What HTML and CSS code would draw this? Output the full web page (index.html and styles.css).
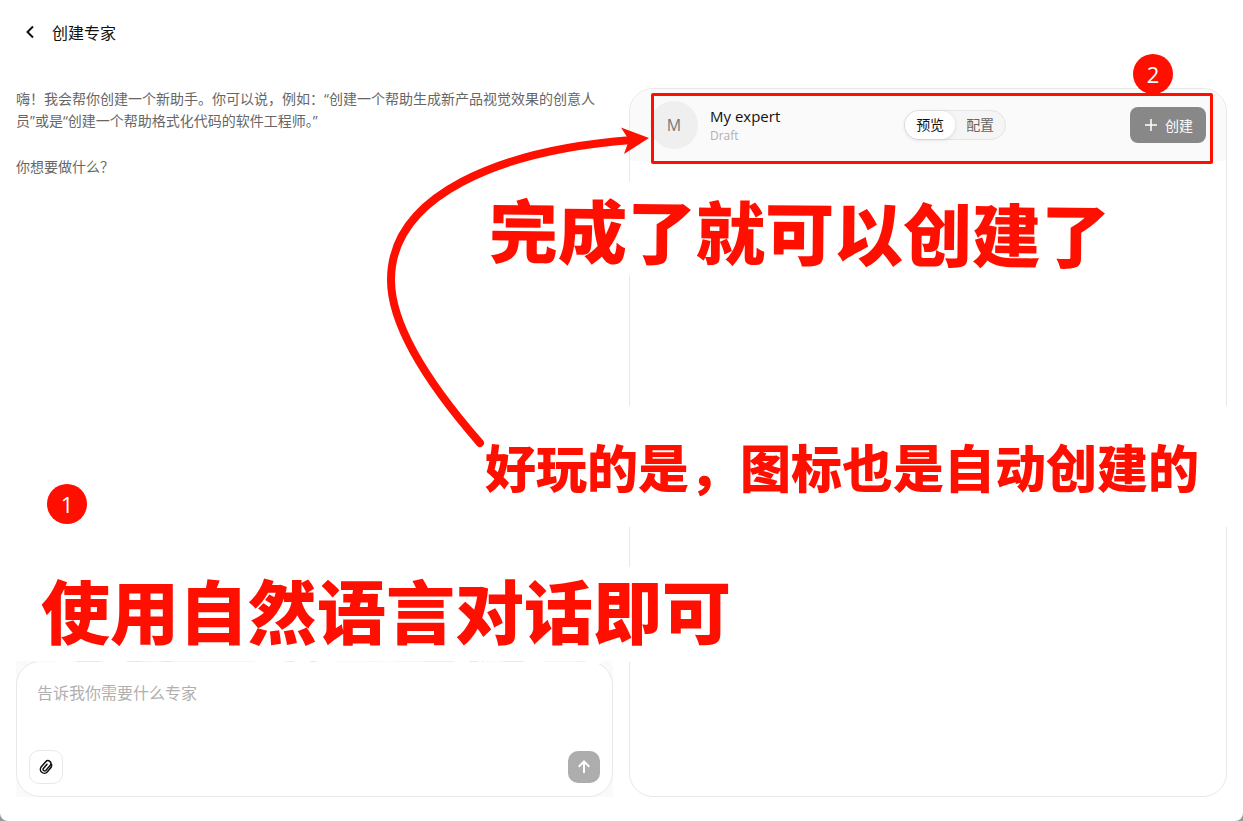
FILE: index.html
```html
<!DOCTYPE html>
<html lang="zh-CN">
<head>
  <meta charset="UTF-8" />
  <meta name="viewport" content="width=device-width, initial-scale=1.0" />
  <title>创建专家</title>
  <link rel="stylesheet" href="styles.css">
</head>
<body>
  <div class="page">
    <header class="topbar">
      <button class="back" type="button" aria-label="返回">
        <svg width="20" height="20" viewBox="0 0 20 20" fill="none" stroke="currentColor" stroke-width="2"><path d="M13 4.500 7.500 10l5.500 5.500"/></svg>
      </button>
      <h1>创建专家</h1>
    </header>

    <main class="columns">
      <section class="chat">
        <div class="messages">
          <p>嗨！我会帮你创建一个新助手。你可以说，例如：“创建一个帮助生成新产品视觉效果的创意人员”或是“创建一个帮助格式化代码的软件工程师。”</p>
          <p>你想要做什么？</p>
        </div>
        <div class="composer-wrap">
          <form class="composer">
            <textarea aria-label="告诉我你需要什么专家" placeholder="告诉我你需要什么专家"></textarea>
            <div class="actions">
              <button class="attach" type="button" aria-label="添加附件">
                <svg width="16" height="16" viewBox="0 0 16 16" fill="none" stroke="currentColor" stroke-width="1.5" stroke-linecap="round"><path d="M12.9 8.6 9.2 12.9a3.9 3.9 0 0 1-5.9-5.1l4.4-5.1a2.9 2.9 0 0 1 4.4 3.8l-4.3 5a1.6 1.6 0 0 1-2.4-2.1l3.6-4.2"/><path d="M13.6 5.4c.3 1.200 0 2.300-.7 3.200"/></svg>
              </button>
              <button class="send" type="submit" aria-label="发送">
                <svg width="16" height="16" viewBox="0 0 16 16" fill="none" stroke="currentColor" stroke-width="2"><path d="M8 14V3M2.700 7.800 8 2.500l5.300 5.300"/></svg>
              </button>
            </div>
          </form>
        </div>
      </section>

      <section class="panel">
        <div class="panel-head">
          <div class="expert">
            <span class="avatar">M</span>
            <div>
              <h2>My expert</h2>
              <p>Draft</p>
            </div>
          </div>
          <div class="tabs">
            <button class="active" type="button">预览</button>
            <button type="button">配置</button>
          </div>
          <button class="create" type="button">
            <svg width="16" height="16" viewBox="0 0 16 16" fill="none" stroke="currentColor" stroke-width="1.5"><path d="M8 2v12M2 8h12"/></svg>
            创建
          </button>
          <div class="frame"></div>
          <span class="badge badge-two">2</span>
        </div>
      </section>
    </main>

    <!-- Notes drawn over the page -->
    <p class="note note-done">完成了就可以创建了</p>
    <p class="note note-icon">好玩的是，图标也是自动创建的</p>
    <p class="note note-talk">使用自然语言对话即可</p>
    <span class="badge badge-one">1</span>
    <svg class="arrow" width="270" height="330" viewBox="385 125 270 330">
      <path d="M480 443C446 404 391 335 391 280C391 195 500 150 632 140" fill="none" stroke="#ff0f00" stroke-width="8" stroke-linecap="round"/>
      <path d="M649 138 621 127.500 629 140 624 154Z" fill="#ff0f00"/>
    </svg>
  </div>
</body>
</html>
```
FILE: styles.css
```css
* {
  margin: 0;
  padding: 0;
  box-sizing: border-box;
}
body {
  font-family: "Open Sans", "Noto Sans CJK SC", sans-serif;
  font-size: 14px;
  background-color: #999;
  color: #111;
}
button, textarea {
  font: inherit;
  color: inherit;
  border: none;
  background: none;
}
button {
  display: flex;
  align-items: center;
  justify-content: center;
  cursor: pointer;
}
.page {
  position: relative;
  display: flex;
  flex-direction: column;
  min-height: 100vh;
  padding: 0 16px 24px;
  background-color: #fff;
  border-radius: 0 0 8px 8px;
  overflow: hidden;
}
/* Top bar */
.topbar {
  display: flex;
  align-items: center;
  gap: 12px;
  height: 64px;
  margin-bottom: 24px;
  padding-left: 4px;
}
.back {
  width: 20px;
  height: 20px;
}
.topbar h1 {
  font-size: 16px;
  font-weight: 400;
}
.columns {
  flex: 1;
  display: grid;
  grid-template-columns: 597fr 598fr;
  gap: 16px;
}
/* Chat column */
.chat {
  display: flex;
  flex-direction: column;
  justify-content: space-between;
}
.messages {
  display: flex;
  flex-direction: column;
  gap: 24px;
  color: #666;
  line-height: 22px;
}
.composer-wrap {
  background: #fafafa;
}
.composer {
  display: flex;
  flex-direction: column;
  height: 136px;
  padding: 12px;
  background-color: #fff;
  border: 1px solid #e8e8e8;
  border-radius: 24px;
}
.composer textarea {
  flex: 1;
  padding: 8px;
  font-size: 16px;
  line-height: 22px;
  resize: none;
  outline: none;
}
.composer textarea::placeholder {
  color: #b0b0b0;
}
.actions {
  display: flex;
  align-items: center;
  justify-content: space-between;
}
.attach {
  width: 34px;
  height: 34px;
  border: 1px solid #e8e8e8;
  border-radius: 10px;
}
.send {
  width: 32px;
  height: 32px;
  border-radius: 10px;
  background-color: #adadad;
  color: #fff;
}
/* Preview panel */
.panel {
  border: 1px solid #e8e8e8;
  border-radius: 24px;
}
.panel-head {
  position: relative;
  display: flex;
  align-items: center;
  justify-content: space-between;
  height: 72px;
  padding: 0 20px;
  background-color: #fafafa;
  border-radius: 24px 24px 0 0;
}
.expert {
  display: flex;
  align-items: center;
  gap: 12px;
}
.avatar {
  display: flex;
  align-items: center;
  justify-content: center;
  width: 48px;
  height: 48px;
  border-radius: 50%;
  background-color: #efefef;
  color: #777;
  font-size: 16px;
}
.expert h2 {
  font-size: 15px;
  font-weight: 400;
  line-height: 22px;
}
.expert p {
  font-size: 12px;
  line-height: 18px;
  color: #b0b0b0;
}
.tabs {
  display: flex;
  border: 1px solid #e4e4e4;
  border-radius: 16px;
  background-color: #f5f5f5;
}
.tabs button {
  width: 50px;
  height: 28px;
  padding-bottom: 2px;
  border-radius: 14px;
  color: #666;
}
.tabs .active {
  background-color: #fff;
  color: #111;
  box-shadow: 0 1px 4px rgba(0, 0, 0, 0.12);
}
.create {
  gap: 6px;
  width: 76px;
  height: 36px;
  border-radius: 8px;
  background-color: #888;
  color: #fff;
}
/* Red notes */
.frame {
  position: absolute;
  inset: 4px 13px -3px 21px;
  border: 3px solid #ff0f00;
  border-radius: 2px;
  pointer-events: none;
}
.badge {
  position: absolute;
  display: flex;
  align-items: center;
  justify-content: center;
  width: 40px;
  height: 40px;
  border-radius: 50%;
  background-color: #ff0f00;
  color: #fff;
  font-size: 22px;
}
.badge-one {
  left: 47px;
  top: 484px;
}
.badge-two {
  right: 53px;
  top: -35px;
}
.note {
  position: absolute;
  color: #ff0f00;
  font-family: "Noto Sans CJK SC", sans-serif;
  font-weight: 900;
  white-space: nowrap;
}
.note-done {
  left: 489px;
  top: 183px;
  font-size: 69px;
  line-height: 94px;
  background-color: #fff;
  transform: rotate(0.5deg);
}
.note-icon {
  left: 485px;
  top: 406px;
  padding-right: 30px;
  font-size: 51px;
  line-height: 121px;
  background-color: #fff;
}
.note-talk {
  left: 41px;
  top: 560px;
  font-size: 69px;
  line-height: 98px;
  -webkit-text-stroke: 32px #fff;
  paint-order: stroke fill;
}
.arrow {
  position: absolute;
  left: 385px;
  top: 125px;
  pointer-events: none;
}
```
